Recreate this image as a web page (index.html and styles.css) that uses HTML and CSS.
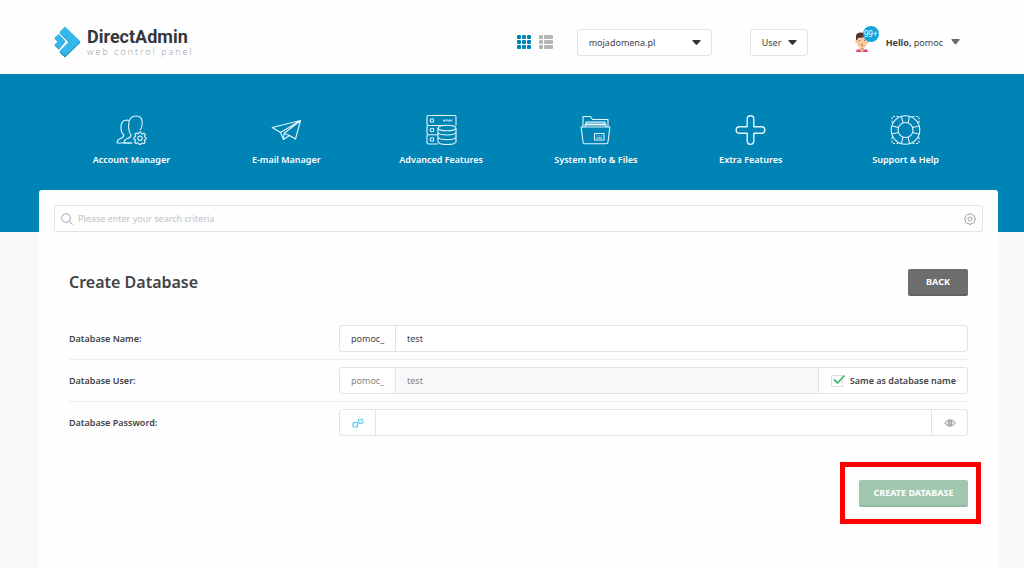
FILE: index.html
```
<!DOCTYPE html>
<html lang="en">
<head>
<meta charset="utf-8">
<meta name="viewport" content="width=device-width, initial-scale=1">
<title>DirectAdmin - Create Database</title>
<link rel="stylesheet" href="styles.css">
</head>
<body>
<header class="topbar">
  <a class="logo" href="#">
    <svg class="logo-mark" viewBox="0 0 27 32" width="27" height="32" aria-hidden="true">
      <path fill="#1b86b8" d="M11 2.500l15.500 14L11 31.500l-5.500-5L15 16.500 5.500 7zM5 10l6 6-6 7.500-4.500-4L4 16 .5 12.500z"/>
      <path fill="#35b7ea" d="M11 .5l15.500 15L11 30l-5.500-5L15 15.500 5.500 6zM5 8l6.500 7L5 22.500l-4.500-4L4 15 .5 11.500z"/>
    </svg>
    <span class="logo-text">
      <span class="logo-name">DirectAdmin</span>
      <span class="logo-sub">web control panel</span>
    </span>
  </a>
  <div class="view-switch">
    <button class="icon-btn view-grid" type="button" aria-label="Grid view">
      <svg viewBox="0 0 14 14" width="14" height="14" fill="currentColor"><rect width="4" height="4" rx="1"/><rect x="5" width="4" height="4" rx="1"/><rect x="10" width="4" height="4" rx="1"/><rect y="5" width="4" height="4" rx="1"/><rect x="5" y="5" width="4" height="4" rx="1"/><rect x="10" y="5" width="4" height="4" rx="1"/><rect y="10" width="4" height="4" rx="1"/><rect x="5" y="10" width="4" height="4" rx="1"/><rect x="10" y="10" width="4" height="4" rx="1"/></svg>
    </button>
    <button class="icon-btn view-list" type="button" aria-label="List view">
      <svg viewBox="0 0 14 14" width="14" height="14" fill="currentColor"><rect width="4" height="4" rx="1"/><rect x="5" width="9" height="4" rx="1"/><rect y="5" width="4" height="4" rx="1"/><rect x="5" y="5" width="9" height="4" rx="1"/><rect y="10" width="4" height="4" rx="1"/><rect x="5" y="10" width="9" height="4" rx="1"/></svg>
    </button>
  </div>
  <div class="picker picker-domain">
    <select aria-label="Domain"><option>mojadomena.pl</option></select>
    <svg class="caret" viewBox="0 0 9 5" width="9" height="5" aria-hidden="true"><path d="M1 0h7q1 0 .5 1L5.300 4.500q-.8.800-1.600 0L.5 1Q0 0 1 0z"/></svg>
  </div>
  <div class="picker picker-level">
    <select aria-label="Access level"><option>User</option></select>
    <svg class="caret" viewBox="0 0 9 5" width="9" height="5" aria-hidden="true"><path d="M1 0h7q1 0 .5 1L5.300 4.500q-.8.800-1.600 0L.5 1Q0 0 1 0z"/></svg>
  </div>
  <button class="account" type="button">
    <span class="avatar">
      <svg viewBox="0 0 14 20" width="14" height="20" aria-hidden="true">
        <path fill="#d9486a" d="M1 20q0-3 4-3h4q4 0 4 3z"/>
        <path fill="#fff" d="M4 17h6l-3 3z"/>
        <path fill="#e9a67c" d="M5 14h4v4l-2 1-2-1z"/>
        <ellipse cx="1.500" cy="9.500" rx="1.200" ry="1.600" fill="#f0b088"/>
        <ellipse cx="12.500" cy="9.500" rx="1.200" ry="1.600" fill="#f0b088"/>
        <path fill="#fbc9a0" d="M2 5h10v6q0 5-5 5t-5-5z"/>
        <path fill="#50342b" d="M1 8V4q0-3 4-3.500L11 1q2.500 1 2 4v3h-1L11 5 3 6 2 8z"/>
        <path stroke="#50342b" fill="none" stroke-width=".7" d="M4 8.500h1M9 8.500h1M6 13h2"/>
      </svg>
      <span class="badge">99+</span>
    </span>
    <span><b>Hello,</b> pomoc</span>
    <svg class="account-caret" viewBox="0 0 9 6" width="9" height="6" aria-hidden="true"><path d="M1 0h7q1 0 .5 1L5.300 5q-.8.800-1.600 0L.5 1Q0 0 1 0z"/></svg>
  </button>
</header>

<nav class="mainnav" aria-label="Main">
  <a href="#">
    <svg class="nav-icon" viewBox="0 0 30 30">
      <path d="M15 28H.7q-.4-3 3.300-4.500 3.500-1.300 3.300-3.500-2.500-2-2.800-6.500-.5-8 5.500-8.500 1.500 0 2.500.5"/>
      <path d="M16 28H7.500q-.3-3 3.500-4.500t3.500-3.500q-2-2.500-2.300-7Q11.500 1 19.500 1q7.500 0 6 9.500-.3 3-2 4.500"/>
      <path fill="#0083b5" d="M22.500 17h2l.4 1.600 1.200.5 1.400-.9 1.400 1.400-.9 1.400.5 1.200 1 .3v2l-1.200.3-.5 1.200.9 1.400-1.400 1.400-1.400-.9-1.200.5-.3 1h-2l-.3-1.200-1.200-.5-1.400.9-1.400-1.400.9-1.400-.5-1.200-1-.3v-2l1.200-.3.500-1.200-.9-1.400 1.400-1.400 1.400.9 1.200-.5z"/>
      <circle cx="23.500" cy="23.200" r="2.200"/>
    </svg>
    <span>Account Manager</span>
  </a>
  <a href="#">
    <svg class="nav-icon" viewBox="0 0 30 30"><path d="M.7 12.500L29 5.500 24 24l-6-3.500-6 4-3-7zM29 5.500L9 17.500M29 5.500L12.500 18.500 12 24.500M12.500 18.500L18 20.500"/></svg>
    <span>E-mail Manager</span>
  </a>
  <a href="#">
    <svg class="nav-icon" viewBox="0 0 30 30">
      <path d="M11.500 29H2q-1.500 0-1.500-1.500V21q0-1 1-1.200-1-.3-1-1.300V12q0-1 1-1.500-1-.5-1-1.500V2Q.5.500 2 .5h26q1.500 0 1.500 1.500v8.500M1.500 10.500H20M1.500 19.800h10"/>
      <circle cx="5.500" cy="5.500" r="1.800"/><circle cx="5.500" cy="15" r="1.800"/><circle cx="5.500" cy="24.500" r="1.800"/>
      <path stroke-width=".8" d="M16.500 4.500l1 2 1.200-2 1.200 2 1.200-2 1.200 2 1.200-2 1.200 2 1.200-2"/>
      <ellipse cx="20.500" cy="13" rx="9" ry="2.800"/>
      <path d="M11.500 13v14q1.500 2.500 9 2.500t9-2.500V13M11.500 17.500q1.500 2.500 9 2.500t9-2.500M11.500 22.300q1.500 2.500 9 2.500t9-2.500"/>
    </svg>
    <span>Advanced Features</span>
  </a>
  <a href="#">
    <svg class="nav-icon" viewBox="0 0 30 30">
      <path d="M2.500 12V1.500H10l2 3h15.500V12M4.500 12V9.500h21V12M5.500 9V7h19v2"/>
      <path fill="#fff" fill-opacity=".45" stroke="none" d="M5 7h20v4H5z"/>
      <path d="M.6 12h28.800l-2 15.500q-.2 1.200-1.500 1.200H4.100q-1.300 0-1.500-1.200z"/>
      <path d="M14 18.500h9.500V25H14zM16.500 20.500v.7M18.700 20.500v.7M21 20.500v.7M16 23h5.500"/>
    </svg>
    <span>System Info &amp; Files</span>
  </a>
  <a href="#">
    <svg class="nav-icon nav-plus" viewBox="0 0 30 30"><path d="M15 .7q3.300 0 3.300 3.500v7.500h7.500q3.500 0 3.500 3.300t-3.500 3.300h-7.500v7.500q0 3.500-3.300 3.500t-3.300-3.500v-7.500H4.200Q.7 18.300.7 15t3.500-3.300h7.500V4.200Q11.700.7 15 .7z"/></svg>
    <span>Extra Features</span>
  </a>
  <a href="#">
    <svg class="nav-icon" viewBox="0 0 30 30">
      <circle cx="15" cy="15" r="14.300"/><circle cx="15" cy="15" r="7.500"/>
      <path d="M11 1.500l1.500 6.500M19 1.500L17.500 8M11 28.500l1.500-6.500M19 28.500L17.500 22M1.500 11L8 12.500M1.500 19L8 17.500M28.500 11L22 12.500M28.500 19L22 17.500"/>
      <path stroke-dasharray="2 1.500" d="M8 1.500H2q-.5 0-.5.500v6M22 1.500h6q.5 0 .5.500v6M8 28.500H2q-.5 0-.5-.5v-6M22 28.500h6q.5 0 .5-.5v-6"/>
    </svg>
    <span>Support &amp; Help</span>
  </a>
</nav>

<main class="card">
  <form class="search" role="search">
    <svg viewBox="0 0 12 12" width="12" height="12" aria-hidden="true"><circle cx="5" cy="5" r="4.300"/><path d="M8.200 8.200l3.300 3.300"/></svg>
    <input type="search" aria-label="Search" placeholder="Please enter your search criteria">
    <button class="icon-btn" type="button" aria-label="Search settings">
      <svg viewBox="0 0 12 12" width="12" height="12"><path d="M5 .7h2l.5 1.200 1.600-.5L10.600 3l-.5 1.500L11.300 5v2l-1.200.5.500 1.600-1.500 1.500-1.600-.5L7 11.300H5l-.5-1.200-1.600.5-1.500-1.500.5-1.600L.7 7V5l1.200-.5-.5-1.600 1.500-1.500 1.600.5z"/><circle cx="6" cy="6" r="2"/></svg>
    </button>
  </form>

  <section class="content">
    <div class="content-head">
      <h1>Create Database</h1>
      <button class="btn btn-back" type="button">BACK</button>
    </div>
    <form>
      <div class="row">
        <label for="db-name">Database Name:</label>
        <div class="field">
          <span class="prefix">pomoc_</span>
          <input id="db-name" type="text" value="test">
        </div>
      </div>
      <div class="row">
        <label for="db-user">Database User:</label>
        <div class="field field-disabled">
          <span class="prefix">pomoc_</span>
          <input id="db-user" type="text" value="test" disabled>
          <label class="same"><input type="checkbox" checked><svg class="tick" viewBox="0 0 14 13" width="14" height="13" aria-hidden="true"><path class="tick-box" d="M.5 1.500h11v11H.5z"/><path class="tick-mark" d="M3 5.500L6.500 9 13.500 1.500"/></svg>Same as database name</label>
        </div>
      </div>
      <div class="row">
        <label for="db-pass">Database Password:</label>
        <div class="field">
          <button class="addon addon-dice" type="button" aria-label="Generate password">
            <svg viewBox="0 0 12 10" width="12" height="10"><path d="M1 4.500h4.500V9H1zM6.500 1.500L10.500 1l.7 4-4.200.6z"/><path d="M2.500 6h.5M4 7.500h.5M8 3h.5M9.500 4h.5"/></svg>
          </button>
          <input id="db-pass" type="password">
          <button class="addon addon-eye" type="button" aria-label="Show password">
            <svg viewBox="0 0 12 8" width="12" height="8"><path d="M.7 4Q3 .8 6 .8T11.300 4Q9 7.200 6 7.200T.7 4z"/><circle cx="6" cy="4" r="2"/><circle cx="6" cy="4" r=".4"/></svg>
          </button>
        </div>
      </div>
      <div class="actions">
        <span class="highlighted"><button class="btn btn-create" type="submit">CREATE DATABASE</button></span>
      </div>
    </form>
  </section>
</main>
</body>
</html>
```
FILE: styles.css
```
* { box-sizing: border-box; }

body {
  display: flex;
  flex-direction: column;
  min-height: 100vh;
  margin: 0;
  background: #f8f8f8;
  color: #424345;
  font: 9px/15px "Noto Sans", "Open Sans", sans-serif;
}

button, input, select { font: inherit; color: inherit; }
button { padding: 0; border: 0; background: none; cursor: pointer; }
a { color: inherit; text-decoration: none; }
svg { display: block; flex: none; }
h1 { margin: 0; font-size: 16px; line-height: 27px; font-weight: 600; }

.topbar {
  display: flex;
  align-items: center;
  height: 74px;
  padding: 10px 64px 0 54px;
  background: #fefefe;
}
.logo { display: flex; align-items: center; gap: 6px; margin-right: auto; }
.logo-text { display: flex; flex-direction: column; }
.logo-name { font: 700 18px/20px Roboto, sans-serif; color: #33383d; }
.logo-sub { font: 300 9px/10px "Open Sans", sans-serif; letter-spacing: 2px; color: #999; }

.view-switch { display: flex; gap: 8px; margin-right: 24px; }
.view-grid { color: #0083b5; }
.view-list { color: #b5b5b5; }

.picker { position: relative; }
.picker select {
  width: 100%;
  height: 27px;
  padding: 0 11px;
  border: 1px solid #e3e3e3;
  border-radius: 3px;
  background: #fff;
  appearance: none;
}
.picker-domain { width: 135px; margin-right: 38px; }
.picker-level { width: 58px; margin-right: 47px; }
.caret { position: absolute; top: 11px; right: 11px; fill: #333639; pointer-events: none; }

.account { display: flex; align-items: center; }
.account-caret { margin-left: 8px; fill: #6b6b6b; }
.avatar { position: relative; width: 31px; }
.badge {
  position: absolute;
  top: -6px;
  left: 8px;
  width: 16px;
  border-radius: 8px;
  background: #14a4dc;
  color: #fff;
  font-size: 8px;
  line-height: 16px;
  text-align: center;
}

.mainnav {
  display: grid;
  grid-template-columns: repeat(6, 1fr);
  padding: 41px 41px 65px 54px;
  background: #0083b5;
  color: #fff;
  font-weight: 600;
}
.mainnav a { display: flex; flex-direction: column; align-items: center; gap: 7px; }
.nav-icon { width: 31px; height: 30px; fill: none; stroke: #e4f5fc; stroke-width: 1.1; stroke-linejoin: round; }
.nav-plus { stroke-width: 1.4; }

.card {
  flex: 1;
  margin: -42px 26px 0 39px;
  padding: 15px;
  border-radius: 3px 3px 0 0;
  background: #fefefe;
}
.search {
  display: flex;
  align-items: center;
  gap: 5px;
  height: 27px;
  padding: 0 6px;
  border: 1px solid #e3e3e3;
  border-radius: 3px;
}
.search svg { fill: none; stroke: #8f8f8f; stroke-width: 0.8; }
.search input { flex: 1; min-width: 0; padding: 0; border: 0; outline: 0; background: none; appearance: none; }
.search input::placeholder { color: #c2c2c2; }

.content { padding: 37px 15px; }
.content-head { display: flex; justify-content: space-between; margin-bottom: 22px; }

.btn {
  height: 27px;
  border-radius: 2px;
  color: #fff;
  font-weight: 700;
}
.btn-back { width: 60px; background: #6c6d6c; border-bottom: 2px solid #606160; }
.btn-create { width: 109px; background: #a2c7b0; border-bottom: 2px solid #92b8a1; }

.row {
  display: flex;
  align-items: center;
  padding: 7px 0;
  border-bottom: 1px solid #eee;
  font-weight: 600;
}
.row:nth-of-type(3) { border-bottom: 0; }
.row > label { width: 270px; }
.field {
  display: flex;
  flex: 1;
  height: 27px;
  border: 1px solid #e3e3e3;
  border-radius: 3px;
  background: #fff;
  font-weight: 400;
  line-height: 25px;
}
.field > input {
  flex: 1;
  min-width: 0;
  padding: 0 11px;
  border: 0;
  outline: 0;
  background: none;
}
.prefix { width: 56px; padding-left: 11px; border-right: 1px solid #e3e3e3; }
.field-disabled .prefix, .field-disabled > input { color: #858585; }
.field-disabled > input { background: #f8f8f8; }
.same {
  display: flex;
  align-items: center;
  gap: 5px;
  padding: 0 11px 0 12px;
  border-left: 1px solid #e3e3e3;
  font-weight: 600;
}
.same input { position: absolute; width: 14px; height: 13px; margin: 0; opacity: 0; }
.tick { fill: none; }
.tick-box { stroke: #ddd; }
.tick-mark { stroke: #46b973; stroke-width: 1.8; }
.addon { display: grid; place-items: center; width: 36px; }
.addon svg { fill: none; stroke: #777; stroke-width: 0.9; }
.addon-dice { border-right: 1px solid #e3e3e3; }
.addon-dice svg { stroke: #41bce8; }
.addon-eye { border-left: 1px solid #e3e3e3; }

.actions { display: flex; justify-content: flex-end; padding-top: 37px; }
.highlighted { position: relative; }
.highlighted::after {
  content: "";
  position: absolute;
  inset: -18px -13px -17px -19px;
  border: 5px solid #f00;
  pointer-events: none;
}
```
